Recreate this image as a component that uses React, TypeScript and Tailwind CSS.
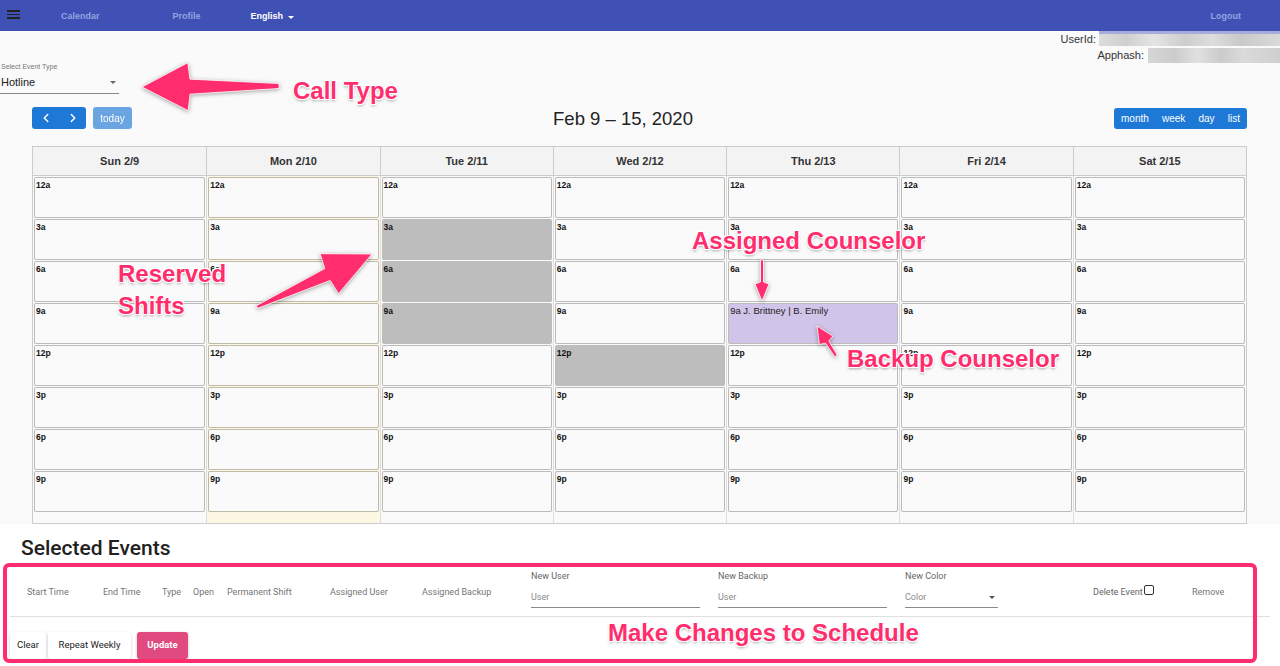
import React from 'react';
import { ChevronLeft, ChevronRight } from 'lucide-react';

const days = ['Sun 2/9', 'Mon 2/10', 'Tue 2/11', 'Wed 2/12', 'Thu 2/13', 'Fri 2/14', 'Sat 2/15'];
const slots = ['12a', '3a', '6a', '9a', '12p', '3p', '6p', '9p'];

// reserved shifts are grey, assigned ones purple (key = "day-slot")
const reserved = new Set(['2-1', '2-2', '2-3', '3-4']);
const assigned: Record<string, string> = { '4-3': 'J. Brittney | B. Emily' };

type Pt = [number, number];

// tapered arrow polygon from tail to tip
const arrow = (tail: Pt, tip: Pt, headLen: number, headHalf: number, neck: number, tailHalf: number) => {
  const dx = tip[0] - tail[0];
  const dy = tip[1] - tail[1];
  const len = Math.hypot(dx, dy);
  const ux = dx / len;
  const uy = dy / len;
  const px = -uy;
  const py = ux;
  const bx = tip[0] - ux * headLen;
  const by = tip[1] - uy * headLen;
  const nx = bx - ux * 2;
  const ny = by - uy * 2;
  const pts: Pt[] = [
    tip,
    [bx + px * headHalf, by + py * headHalf],
    [nx + px * neck, ny + py * neck],
    [tail[0] + px * tailHalf, tail[1] + py * tailHalf],
    [tail[0] - px * tailHalf, tail[1] - py * tailHalf],
    [nx - px * neck, ny - py * neck],
    [bx - px * headHalf, by - py * headHalf],
  ];
  return pts.map((p) => p.join(',')).join(' ');
};

const Note: React.FC<{ className: string; children: React.ReactNode }> = ({ className, children }) => (
  <div
    className={`absolute font-['Liberation_Sans',Arial,sans-serif] leading-none font-bold text-[#ff2d6d] whitespace-nowrap [text-shadow:-1px_-1px_0_#fff,1px_-1px_0_#fff,-1px_1px_0_#fff,1px_1px_0_#fff,0_2px_3px_rgba(0,0,0,0.35)] ${className}`}
  >
    {children}
  </div>
);

const Field: React.FC<{ label: string; value: string; width: string; select?: boolean }> = ({ label, value, width, select }) => (
  <div className={`flex flex-col ${width}`}>
    <div className="h-[12px] leading-[12px] text-[9px] text-[#666]">{label}</div>
    <div className="h-[20px] mt-[6px] border-b border-[#8a8a8a] flex items-center justify-between text-[9px] text-[#8a8a8a]">
      <span>{value}</span>
      {select && (
        <span className="mr-[3px] w-0 h-0 border-l-[3px] border-r-[3px] border-t-[3px] border-l-transparent border-r-transparent border-t-[#555]" />
      )}
    </div>
  </div>
);

export default function App() {
  return (
    <div className="relative w-full h-[666px] overflow-hidden flex flex-col bg-[#fafafa] font-['Liberation_Sans',Arial,sans-serif]">
      {/* top bar */}
      <nav className="h-[31px] shrink-0 bg-[#3f51b5] flex items-center pt-[2px] text-[9px] font-bold">
        <div className="ml-[7px] -mt-[4px] w-[13px] flex flex-col gap-[2px]">
          <span className="h-[1.5px] bg-[#222]" />
          <span className="h-[1.5px] bg-[#222]" />
          <span className="h-[1.5px] bg-[#222]" />
        </div>
        <span className="ml-[41px] text-[#8fa4e0]">Calendar</span>
        <span className="ml-[73px] text-[#8fa4e0]">Profile</span>
        <span className="ml-[50px] text-white">English</span>
        <span className="ml-[5px] mt-[2px] w-0 h-0 border-l-[3px] border-r-[3px] border-t-[3px] border-l-transparent border-r-transparent border-t-white" />
        <span className="ml-auto mr-[39px] text-[#8fa4e0]">Logout</span>
      </nav>

      {/* user info */}
      <div className="h-[32px] flex flex-col items-end text-[11px] text-[#333]">
        <div className="h-[16px] flex items-center">
          <span>UserId:</span>
          <span className="ml-[3px] w-[181px] h-[15px] -mt-[1px] border-t-[3px] border-[#a6add9] bg-[linear-gradient(90deg,#dcdcdc,#cfcfcf_15%,#e4e4e4_30%,#cdcdcd_48%,#dddddd_62%,#c9c9c9_78%,#d9d9d9)]" />
        </div>
        <div className="h-[16px] flex items-center">
          <span>Apphash:</span>
          <span className="ml-[4px] w-[132px] h-[15px] bg-[linear-gradient(90deg,#d6d6d6,#cccccc_20%,#e0e0e0_38%,#cbcbcb_55%,#dadada_72%,#cfcfcf)]" />
        </div>
      </div>

      {/* event type select */}
      <div className="w-[119px]">
        <div className="h-[8px] leading-[8px] text-[7px] text-[#777] pl-[1px]">Select Event Type</div>
        <div className="h-[23px] border-b border-[#8a8a8a] flex items-center justify-between">
          <span className="pl-[1px] text-[11px] text-[#222]">Hotline</span>
          <span className="mr-[3px] w-0 h-0 border-l-[3px] border-r-[3px] border-t-[3px] border-l-transparent border-r-transparent border-t-[#666]" />
        </div>
      </div>

      {/* toolbar */}
      <div className="mt-[13px] h-[22px] pl-[32px] pr-[33px] flex items-center justify-between">
        <div className="flex items-center">
          <div className="flex h-[22px] rounded-[3px] bg-[#1e79d6] text-white">
            <span className="w-[27px] flex items-center justify-center">
              <ChevronLeft size={14} strokeWidth={2.5} />
            </span>
            <span className="w-[27px] flex items-center justify-center">
              <ChevronRight size={14} strokeWidth={2.5} />
            </span>
          </div>
          <span className="ml-[7px] w-[39px] h-[22px] rounded-[3px] bg-[#1e79d6] opacity-65 text-white text-[10px] flex items-center justify-center">
            today
          </span>
        </div>
        <h1 className="mt-[2px] text-[18.5px] text-[#222]">Feb 9 – 15, 2020</h1>
        <div className="flex h-[21px] w-[133px] rounded-[3px] bg-[#1e79d6] text-white text-[10px] items-center justify-between px-[7px]">
          <span>month</span>
          <span>week</span>
          <span>day</span>
          <span>list</span>
        </div>
      </div>

      {/* week grid */}
      <div className="mt-[17px] ml-[32px] mr-[33px] border border-[#cccccc]">
        <div className="grid grid-cols-7 h-[29px] bg-[#f3f3f3] border-b border-[#cccccc]">
          {days.map((d, i) => (
            <div
              key={d}
              className={`flex items-center justify-center text-[11px] font-bold text-[#333] ${i > 0 ? 'border-l border-[#cccccc]' : ''}`}
            >
              {d}
            </div>
          ))}
        </div>
        <div className="grid grid-cols-7">
          {days.map((d, di) => (
            <div
              key={d}
              className={`flex flex-col gap-[1px] pt-[1px] pb-[11px] px-[1px] ${di > 0 ? 'border-l border-[#dddddd]' : ''} ${di === 1 ? 'bg-[#fcf8e3]' : ''}`}
            >
              {slots.map((s, si) => {
                const key = `${di}-${si}`;
                const who = assigned[key];
                const bg = reserved.has(key) ? 'bg-[#bdbdbd]' : who ? 'bg-[#d1c4e9]' : 'bg-[#fafafa]';
                return (
                  <div
                    key={s}
                    className={`h-[41px] border border-[rgba(0,0,0,0.25)] rounded-[2px] bg-clip-padding ${bg} pl-[1px] leading-[10px] text-[#111]`}
                  >
                    {who ? (
                      <span className="text-[9.5px] text-[#222]">
                        {s} {who}
                      </span>
                    ) : (
                      <span className="text-[8.5px] font-bold">{s}</span>
                    )}
                  </div>
                );
              })}
            </div>
          ))}
        </div>
      </div>

      {/* selected events */}
      <div className="flex-1 bg-white font-['Roboto','Liberation_Sans',sans-serif]">
        <h2 className="ml-[21px] mt-[12px] text-[21px] leading-[24px] font-medium text-[#212121]">Selected Events</h2>
        <div className="mx-[10px] mt-[4px] h-[53px] pt-[5px] border-b border-[#e0e0e0] flex items-start pl-[17px] text-[9px] text-[#757575]">
          <span className="w-[76px] self-center">Start Time</span>
          <span className="w-[59px] self-center">End Time</span>
          <span className="w-[31px] self-center">Type</span>
          <span className="w-[34px] self-center">Open</span>
          <span className="w-[103px] self-center">Permanent Shift</span>
          <span className="w-[92px] self-center">Assigned User</span>
          <span className="w-[109px] self-center">Assigned Backup</span>
          <div className="w-[187px] mt-[1px]">
            <Field label="New User" value="User" width="w-[169px]" />
          </div>
          <div className="w-[187px] mt-[1px]">
            <Field label="New Backup" value="User" width="w-[169px]" />
          </div>
          <div className="w-[188px] mt-[1px]">
            <Field label="New Color" value="Color" width="w-[93px]" select />
          </div>
          <div className="w-[99px] self-center flex items-center text-[#666]">
            <span>Delete Event</span>
            <span className="ml-[1px] mb-[6px] w-[10px] h-[10px] border border-[#333] rounded-[2px] bg-white" />
          </div>
          <span className="self-center">Remove</span>
        </div>
        <div className="mt-[15px] pl-[10px] flex items-center text-[9.5px]">
          <button className="h-[27px] w-[36px] bg-white text-[#222] rounded-[3px] shadow-[0_1px_3px_rgba(0,0,0,0.2)]">Clear</button>
          <button className="ml-[2px] h-[27px] w-[83px] bg-white text-[#222] rounded-[3px] shadow-[0_1px_3px_rgba(0,0,0,0.2)]">
            Repeat Weekly
          </button>
          <button className="ml-[6px] h-[27px] w-[51px] bg-[#e14a7e] text-white font-bold rounded-[3px] shadow-[0_1px_3px_rgba(0,0,0,0.25)]">
            Update
          </button>
        </div>
      </div>

      {/* annotations over the screenshot */}
      <svg
        className="absolute inset-0 pointer-events-none [filter:drop-shadow(0_1px_2px_rgba(0,0,0,0.35))]"
        width="1280"
        height="666"
        viewBox="0 0 1280 666"
      >
        <g fill="#ff2d6d" stroke="#fff" strokeWidth="0.8" strokeLinejoin="round">
          <polygon points={arrow([279, 86], [142, 87], 46, 24, 7.5, 2.5)} />
          <polygon points={arrow([257, 307], [372, 254], 47, 22, 6.5, 1.5)} />
          <polygon points={arrow([762, 260], [762, 301], 17, 7, 1.5, 1.5)} />
          <polygon points={arrow([836, 356], [817, 326], 17, 8, 2, 1.5)} />
        </g>
      </svg>
      <Note className="left-[293px] top-[79px] text-[24px]">Call Type</Note>
      <Note className="left-[118px] top-[262px] text-[24px]">Reserved</Note>
      <Note className="left-[118px] top-[294px] text-[24px]">Shifts</Note>
      <Note className="left-[692px] top-[229px] text-[24px]">Assigned Counselor</Note>
      <Note className="left-[847px] top-[347px] text-[24px]">Backup Counselor</Note>
      <Note className="left-[608px] top-[621px] text-[24px]">Make Changes to Schedule</Note>
      <div className="absolute left-[3px] top-[563px] w-[1254px] h-[100px] border-4 border-[#ff2d6d] rounded-[6px] pointer-events-none" />
    </div>
  );
}
